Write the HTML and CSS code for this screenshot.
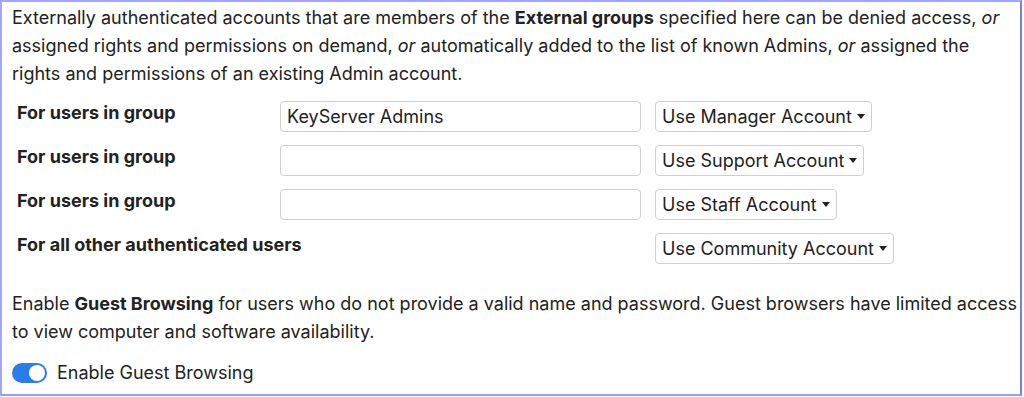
FILE: index.html
```html
<!DOCTYPE html>
<html>
<head>
<meta charset="utf-8">
<link rel="stylesheet" href="styles.css">
</head>
<body>
<div class="frame">
  <p class="intro">Externally authenticated accounts that are members of the <b>External groups</b> specified here can be denied access, <i>or</i> assigned rights and permissions on demand, <i>or</i> automatically added to the list of known Admins, <i>or</i> assigned the rights and permissions of an existing Admin account.</p>
  <div class="grid">
    <div class="label">For users in group</div>
    <div class="field">KeyServer Admins</div>
    <div><span class="select">Use Manager Account<span class="caret"></span></span></div>

    <div class="label">For users in group</div>
    <div class="field"></div>
    <div><span class="select">Use Support Account<span class="caret"></span></span></div>

    <div class="label">For users in group</div>
    <div class="field"></div>
    <div><span class="select">Use Staff Account<span class="caret"></span></span></div>

    <div class="label">For all other authenticated users</div>
    <div></div>
    <div><span class="select">Use Community Account<span class="caret"></span></span></div>
  </div>
  <p class="guest">Enable <b>Guest Browsing</b> for users who do not provide a valid name and password. Guest browsers have limited access to view computer and software availability.</p>
  <div class="toggle-row">
    <span class="toggle"><span class="knob"></span></span>
    <span>Enable Guest Browsing</span>
  </div>
</div>
</body>
</html>
```
FILE: styles.css
```css
html, body {
  margin: 0;
  padding: 0;
  background: #fff;
}
body {
  font-family: Inter, "Noto Sans", sans-serif;
  font-size: 18px;
  color: #222;
}
.frame {
  box-sizing: border-box;
  width: 1022px;
  height: 396px;
  border: 2px solid #a3a6f2;
  border-right-color: #7a7ee8;
  border-bottom-color: #9a9ef0;
  padding: 2px 2px 0 10px;
}
.intro {
  margin: 0;
  padding-right: 8px;
  line-height: 28px;
}
.grid {
  display: grid;
  grid-template-columns: 249px 361px auto;
  column-gap: 14px;
  row-gap: 13px;
  padding-left: 5px;
  margin-top: 13px;
  align-items: start;
}
.label {
  font-weight: 700;
  line-height: 22px;
  padding-top: 1px;
  white-space: nowrap;
}
.field, .select {
  box-sizing: border-box;
  height: 31px;
  border: 1px solid #cfcfcf;
  border-radius: 4px;
  background: #fff;
  line-height: 29px;
}
.field {
  padding: 0 6px;
}
.select {
  display: inline-flex;
  align-items: center;
  padding: 0 6px 0 6px;
  gap: 5px;
}
.caret {
  width: 0;
  height: 0;
  border-left: 4.5px solid transparent;
  border-right: 4.5px solid transparent;
  border-top: 5px solid #222;
}
.guest {
  margin: 26px 0 0 0;
  line-height: 28px;
}
.toggle-row {
  display: flex;
  align-items: center;
  gap: 10px;
  margin-top: 16px;
}
.toggle {
  display: inline-flex;
  align-items: center;
  justify-content: flex-end;
  width: 35px;
  height: 20px;
  border-radius: 10px;
  background: #2a7de8;
  box-sizing: border-box;
  padding: 2px;
}
.knob {
  width: 16px;
  height: 16px;
  border-radius: 50%;
  background: #fff;
}
```
